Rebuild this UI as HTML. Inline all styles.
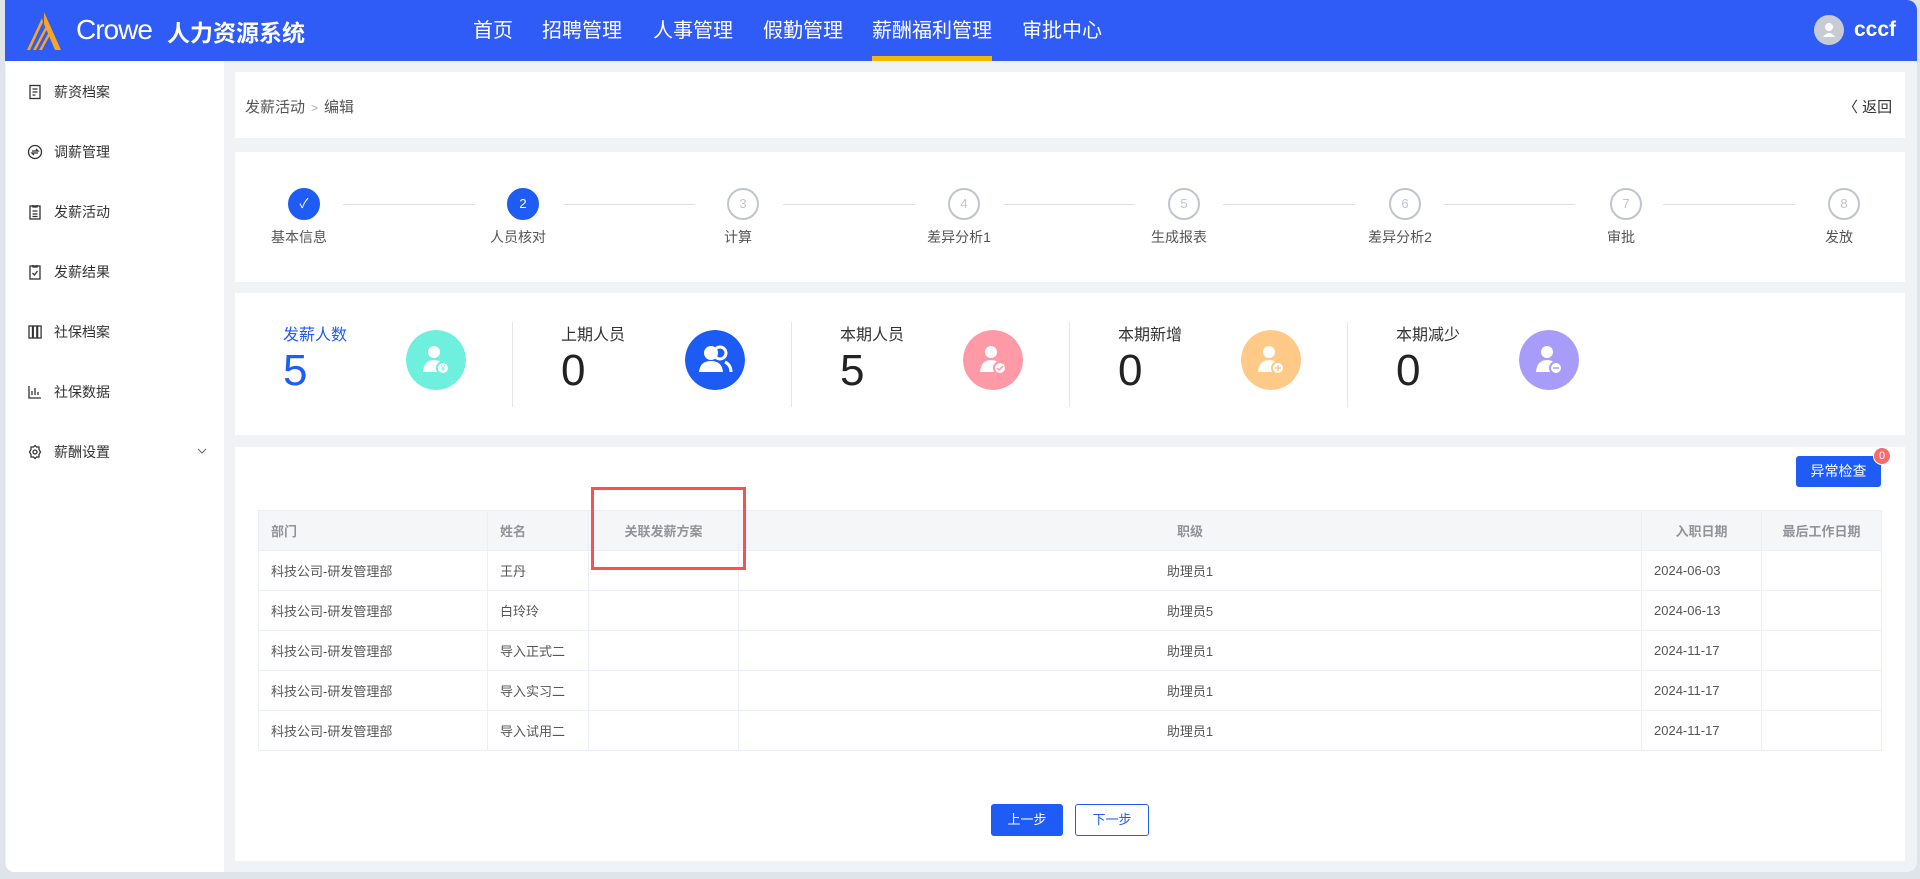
<!DOCTYPE html>
<html><head><meta charset="utf-8"><style>
*{box-sizing:border-box;margin:0;padding:0}
body{width:1920px;height:879px;background:#dfe3ea;font-family:"Liberation Sans","Noto Sans CJK SC",sans-serif;position:relative;overflow:hidden;color:#333}
.win{position:absolute;left:5px;top:0;width:1912px;height:872px;background:#f0f2f5;border-radius:0 10px 10px 10px;overflow:hidden}
.hdr{position:absolute;left:0;top:0;width:1912px;height:61px;background:#2f5bf6;color:#fff}
.side{position:absolute;left:1px;top:61px;width:218px;height:811px;background:#fff}
.si{position:absolute;left:21px;font-size:14px;color:#333;display:flex;align-items:center}
.si svg{margin-right:11px}
.card{position:absolute;left:230px;width:1670px;background:#fff}
.abs{position:absolute}
.step{position:absolute;width:32px;height:32px;border-radius:50%;border:2px solid #c0c4cc;color:#c0c4cc;font-size:13px;text-align:center;line-height:28px;top:36px}
.step.on{background:#1e5cf5;border-color:#1e5cf5;color:#fff}
.sl{position:absolute;top:227px;font-size:14px;color:#555;transform:translateX(-50%);white-space:nowrap}
.line{position:absolute;top:52px;height:1px;background:#dcdfe6}
.stl{position:absolute;top:321px;font-size:16px;color:#333}
.stn{position:absolute;top:346px;font-size:44px;color:#222;font-weight:300}
.ic{position:absolute;top:330px;width:60px;height:60px;border-radius:50%}
.dv{position:absolute;top:322px;width:1px;height:85px;background:#e6e6e6}
table{position:absolute;left:253px;top:510px;border-collapse:collapse;font-size:13px;color:#555}
td,th{border:1px solid #ebeef5;height:40px;padding:0 12px;text-align:left;font-weight:normal}
th{background:#f5f6f7;color:#909399;font-weight:bold}
.c{text-align:center}
</style></head><body>
<div class="win">
 <div class="hdr">
  <svg class="abs" style="left:20px;top:12px" width="38" height="38" viewBox="0 0 38 38"><path d="M19 0 L36 38 L30 38 L19 12Z" fill="#f5a623"/><path d="M17 6 L2 38 L5 38 L18 10Z" fill="#f5a623"/><path d="M21 14 L8 38 L11 38 L22 17Z" fill="#f5a623"/><path d="M24 20 L14 38 L17 38 L25 23Z" fill="#f5a623"/></svg>
  <div class="abs" style="left:71px;top:14px;font-size:28px;letter-spacing:-1px">Crowe</div>
  <div class="abs" style="left:162px;top:14px;font-size:23px;font-weight:bold">人力资源系统</div>
  <div class="abs" style="left:468px;top:14px;font-size:20px">首页</div>
  <div class="abs" style="left:537px;top:14px;font-size:20px">招聘管理</div>
  <div class="abs" style="left:648px;top:14px;font-size:20px">人事管理</div>
  <div class="abs" style="left:758px;top:14px;font-size:20px">假勤管理</div>
  <div class="abs" style="left:867px;top:14px;font-size:20px">薪酬福利管理</div>
  <div class="abs" style="left:867px;top:56px;width:120px;height:5px;background:#f5b800"></div>
  <div class="abs" style="left:1017px;top:14px;font-size:20px">审批中心</div>
  <div class="abs" style="left:1809px;top:15px;width:30px;height:30px;border-radius:50%;background:#c8cbd3"><svg width="30" height="30" viewBox="0 0 30 30"><circle cx="15" cy="12" r="4" fill="#fff"/><path d="M9 22 Q15 14 21 22Z" fill="#fff"/></svg></div>
  <div class="abs" style="left:1849px;top:18px;font-size:21px;font-weight:bold">cccf</div>
 </div>
 <div class="side">
  <div class="si" style="top:21px"><svg width="16" height="16" viewBox="0 0 16 16" fill="none" stroke="#333" stroke-width="1.3"><rect x="3" y="1.5" width="10" height="13"/><path d="M5.5 5h5M5.5 8h5M5.5 11h3"/></svg>薪资档案</div>
  <div class="si" style="top:81px"><svg width="16" height="16" viewBox="0 0 16 16" fill="none" stroke="#333" stroke-width="1.3"><circle cx="8" cy="8" r="6.5"/><path d="M5 7h6l-2-2M11 9H5l2 2"/></svg>调薪管理</div>
  <div class="si" style="top:141px"><svg width="16" height="16" viewBox="0 0 16 16" fill="none" stroke="#333" stroke-width="1.3"><rect x="3" y="2" width="10" height="13"/><path d="M6 1v2h4V1M5.5 7h5M5.5 10h5M5.5 12.5h5"/></svg>发薪活动</div>
  <div class="si" style="top:201px"><svg width="16" height="16" viewBox="0 0 16 16" fill="none" stroke="#333" stroke-width="1.3"><rect x="3" y="2" width="10" height="13"/><path d="M6 1v2h4V1M5.5 9l2 2 3-4"/></svg>发薪结果</div>
  <div class="si" style="top:261px"><svg width="16" height="16" viewBox="0 0 16 16" fill="none" stroke="#333" stroke-width="1.3"><rect x="2" y="2" width="3.5" height="12"/><rect x="6.3" y="2" width="3.5" height="12"/><rect x="10.6" y="2" width="3.5" height="12"/></svg>社保档案</div>
  <div class="si" style="top:321px"><svg width="16" height="16" viewBox="0 0 16 16" fill="none" stroke="#333" stroke-width="1.3"><path d="M2 2v12h12M5 11V7M8 11V4M11 11V8"/></svg>社保数据</div>
  <div class="si" style="top:381px"><svg width="16" height="16" viewBox="0 0 16 16" fill="none" stroke="#333" stroke-width="1.3"><path d="M8 1.5l1.5 1.5h2.5v2.5L13.5 8 12 10.5V13H9.5L8 14.5 6.5 13H4v-2.5L2.5 8 4 5.5V3h2.5z"/><circle cx="8" cy="8" r="2"/></svg>薪酬设置</div>
  <svg class="abs" style="left:191px;top:387px" width="10" height="6" viewBox="0 0 10 6" fill="none" stroke="#666"><path d="M1 1l4 4 4-4"/></svg>
 </div>
 <div class="card" style="top:72px;height:66px">
  <div class="abs" style="left:10px;top:24px;font-size:15px;color:#555">发薪活动<span style="color:#aaa;margin:0 6px;font-size:12px">&gt;</span>编辑</div>
  <div class="abs" style="left:1608px;top:24px;font-size:15px;color:#333">〈 返回</div>
 </div>
 <div class="card" style="top:152px;height:130px">
  <div class="step on" style="left:53px">✓</div>
  <div class="step on" style="left:272px">2</div>
  <div class="step" style="left:492px">3</div>
  <div class="step" style="left:713px">4</div>
  <div class="step" style="left:933px">5</div>
  <div class="step" style="left:1154px">6</div>
  <div class="step" style="left:1375px">7</div>
  <div class="step" style="left:1593px">8</div>
  <div class="line" style="left:108px;width:132px"></div>
  <div class="line" style="left:328px;width:132px"></div>
  <div class="line" style="left:548px;width:132px"></div>
  <div class="line" style="left:768px;width:132px"></div>
  <div class="line" style="left:988px;width:132px"></div>
  <div class="line" style="left:1208px;width:132px"></div>
  <div class="line" style="left:1428px;width:132px"></div>
 </div>
 <div class="sl" style="left:294px">基本信息</div>
 <div class="sl" style="left:513px">人员核对</div>
 <div class="sl" style="left:733px">计算</div>
 <div class="sl" style="left:954px">差异分析1</div>
 <div class="sl" style="left:1174px">生成报表</div>
 <div class="sl" style="left:1395px">差异分析2</div>
 <div class="sl" style="left:1616px">审批</div>
 <div class="sl" style="left:1834px">发放</div>
 <div class="card" style="top:293px;height:142px"></div>
 <div class="stl" style="left:278px;color:#1e5cf5">发薪人数</div><div class="stn" style="left:278px;color:#1e5cf5">5</div>
 <div class="stl" style="left:556px">上期人员</div><div class="stn" style="left:556px">0</div>
 <div class="stl" style="left:835px">本期人员</div><div class="stn" style="left:835px">5</div>
 <div class="stl" style="left:1113px">本期新增</div><div class="stn" style="left:1113px">0</div>
 <div class="stl" style="left:1391px">本期减少</div><div class="stn" style="left:1391px">0</div>
 <div class="dv" style="left:507px"></div><div class="dv" style="left:786px"></div><div class="dv" style="left:1064px"></div><div class="dv" style="left:1342px"></div>
 <svg class="ic" style="left:401px" viewBox="0 0 60 60"><circle cx="30" cy="30" r="30" fill="#6ff0de"/><circle cx="28" cy="22" r="6" fill="#fff"/><path d="M17 42 Q18 30 28 30 Q34 30 36 34 L34 42Z" fill="#fff"/><circle cx="37" cy="38" r="6" fill="#fff" stroke="#6ff0de" stroke-width="2"/><text x="37" y="41" font-size="8" text-anchor="middle" fill="#6ff0de">¥</text></svg>
 <svg class="ic" style="left:680px" viewBox="0 0 60 60"><circle cx="30" cy="30" r="30" fill="#1c5cf5"/><circle cx="26" cy="23" r="7" fill="#fff"/><circle cx="35" cy="23" r="6" fill="none" stroke="#fff" stroke-width="3"/><path d="M14 42 Q15 31 26 31 Q37 31 38 42Z" fill="#fff"/><path d="M40 32 Q46 35 46 42" stroke="#fff" stroke-width="3" fill="none"/></svg>
 <svg class="ic" style="left:958px" viewBox="0 0 60 60"><circle cx="30" cy="30" r="30" fill="#fd9aa5"/><circle cx="28" cy="22" r="6" fill="#fff"/><path d="M17 42 Q18 30 28 30 Q34 30 36 34 L34 42Z" fill="#fff"/><circle cx="37" cy="38" r="6" fill="#fff" stroke="#fd9aa5" stroke-width="2"/><path d="M34 38l2 2 4-4" stroke="#fd9aa5" stroke-width="1.5" fill="none"/></svg>
 <svg class="ic" style="left:1236px" viewBox="0 0 60 60"><circle cx="30" cy="30" r="30" fill="#ffc988"/><circle cx="28" cy="22" r="6" fill="#fff"/><path d="M17 42 Q18 30 28 30 Q34 30 36 34 L34 42Z" fill="#fff"/><circle cx="37" cy="38" r="6" fill="#fff" stroke="#ffc988" stroke-width="2"/><path d="M34 38h6M37 35v6" stroke="#ffc988" stroke-width="1.5"/></svg>
 <svg class="ic" style="left:1514px" viewBox="0 0 60 60"><circle cx="30" cy="30" r="30" fill="#a89cfa"/><circle cx="28" cy="22" r="6" fill="#fff"/><path d="M17 42 Q18 30 28 30 Q34 30 36 34 L34 42Z" fill="#fff"/><circle cx="37" cy="38" r="6" fill="#fff" stroke="#a89cfa" stroke-width="2"/><path d="M34 38h6" stroke="#a89cfa" stroke-width="1.5"/></svg>
 <div class="card" style="top:447px;height:414px"></div>
 <div class="abs" style="left:1791px;top:456px;width:85px;height:31px;background:#1e5cf5;border-radius:3px;color:#fff;font-size:14px;text-align:center;line-height:31px">异常检查</div>
 <div class="abs" style="left:1868px;top:447px;width:18px;height:18px;border-radius:9px;background:#f56c6c;border:1px solid #fff;color:#fff;font-size:11px;text-align:center;line-height:16px">0</div>
 <table>
  <tr><th style="width:229px">部门</th><th style="width:101px">姓名</th><th style="width:150px" class="c">关联发薪方案</th><th style="width:903px" class="c">职级</th><th style="width:120px" class="c">入职日期</th><th style="width:120px" class="c">最后工作日期</th></tr>
  <tr><td>科技公司-研发管理部</td><td>王丹</td><td></td><td class="c">助理员1</td><td>2024-06-03</td><td></td></tr>
  <tr><td>科技公司-研发管理部</td><td>白玲玲</td><td></td><td class="c">助理员5</td><td>2024-06-13</td><td></td></tr>
  <tr><td>科技公司-研发管理部</td><td>导入正式二</td><td></td><td class="c">助理员1</td><td>2024-11-17</td><td></td></tr>
  <tr><td>科技公司-研发管理部</td><td>导入实习二</td><td></td><td class="c">助理员1</td><td>2024-11-17</td><td></td></tr>
  <tr><td>科技公司-研发管理部</td><td>导入试用二</td><td></td><td class="c">助理员1</td><td>2024-11-17</td><td></td></tr>
 </table>
 <div class="abs" style="left:586px;top:487px;width:155px;height:83px;border:3px solid #f55353"></div>
 <div class="abs" style="left:986px;top:804px;width:72px;height:32px;background:#1e5cf5;border-radius:3px;color:#fff;font-size:13px;text-align:center;line-height:32px">上一步</div>
 <div class="abs" style="left:1070px;top:804px;width:74px;height:32px;background:#fff;border:1px solid #1e5cf5;border-radius:3px;color:#1e5cf5;font-size:13px;text-align:center;line-height:30px">下一步</div>
</div>
</body></html>
